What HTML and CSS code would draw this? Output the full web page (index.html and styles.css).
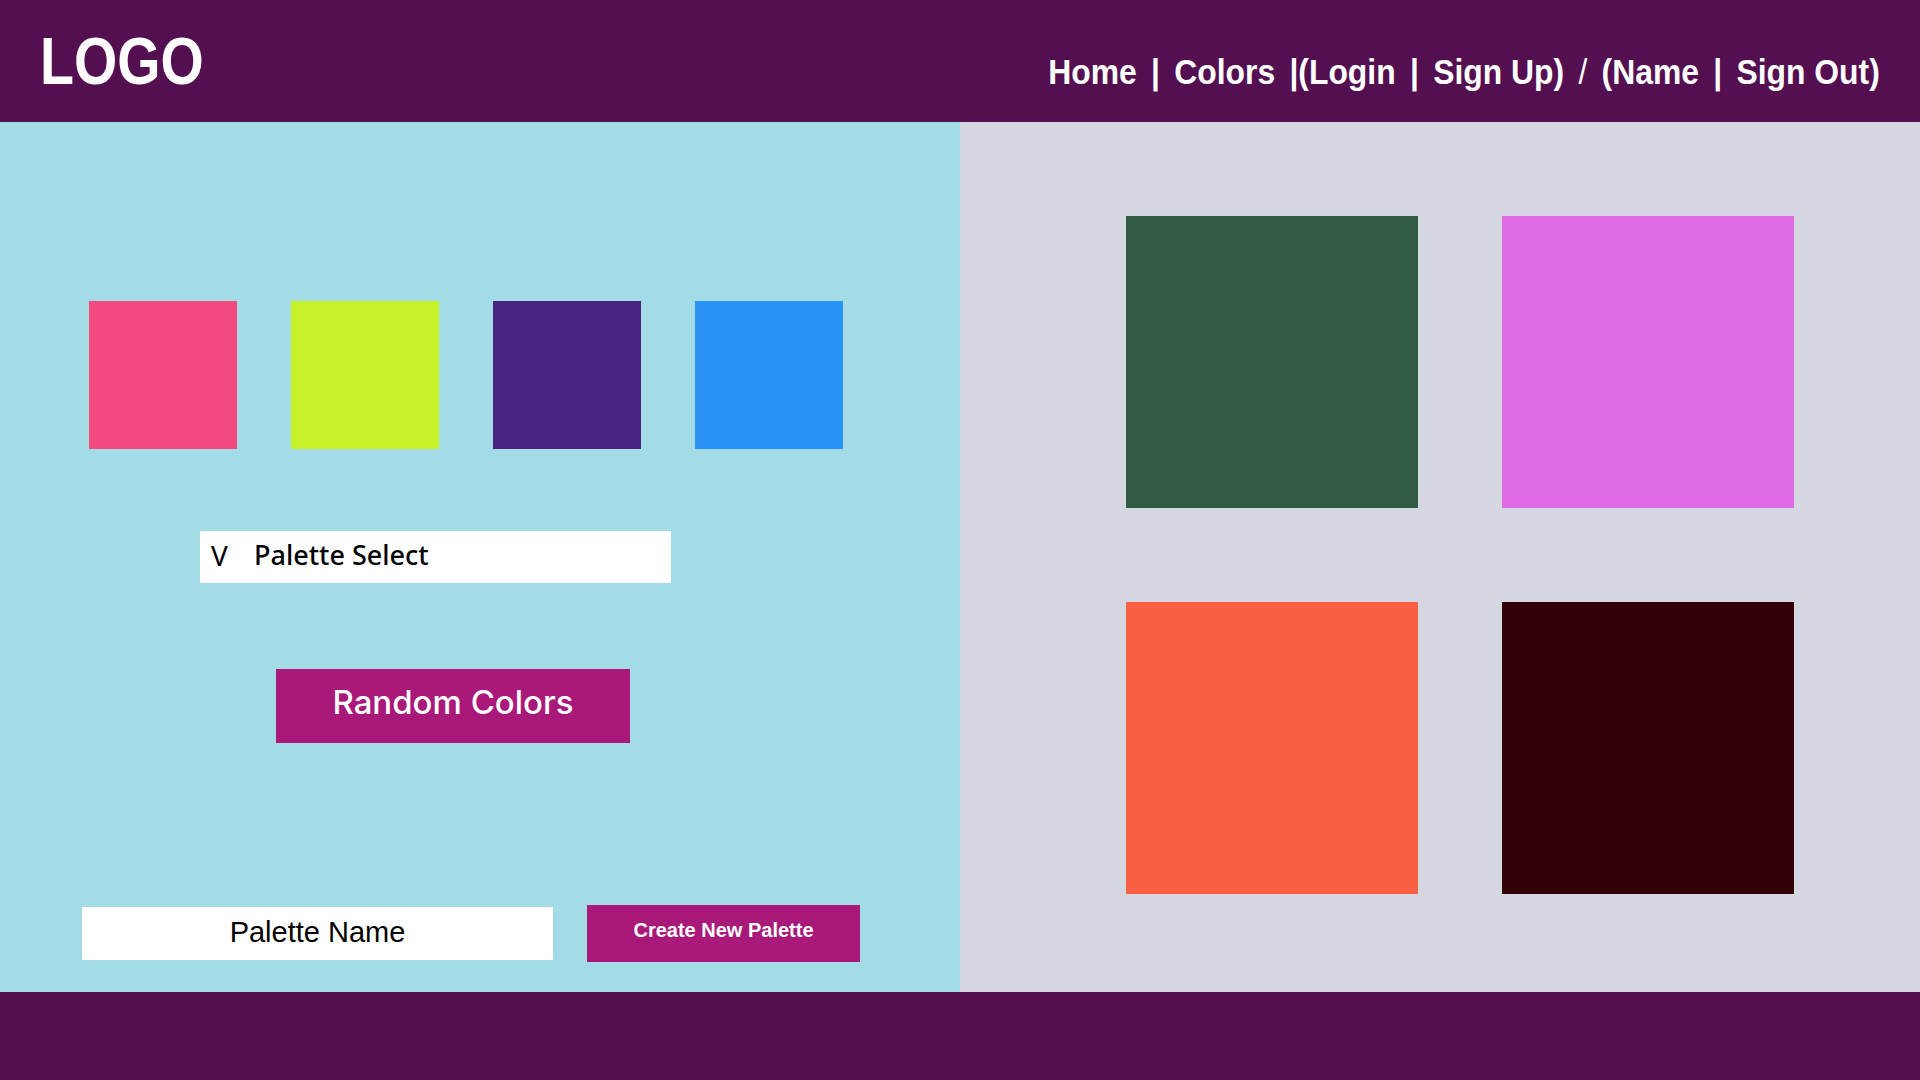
FILE: index.html
```html
<!DOCTYPE html>
<html lang="en">
<head>
<meta charset="utf-8">
<title>Palette</title>
<link rel="stylesheet" href="styles.css">
</head>
<body>
<header class="topbar">
  <div class="logo">LOGO</div>
  <nav class="nav">Home | Colors |(Login | <span class="w">Sign Up)</span> <span class="slash">/</span> (Name | <span class="w">Sign Out)</span></nav>
</header>
<main class="main">
  <section class="left">
    <div class="swatches">
      <div class="swatch" style="background:#f34a80"></div>
      <div class="swatch" style="background:#c5f127"></div>
      <div class="swatch" style="background:#492483"></div>
      <div class="swatch" style="background:#2a92f7"></div>
    </div>
    <div class="select"><span class="caret">V</span><span class="select-label">Palette Select</span></div>
    <button class="random">Random Colors</button>
    <div class="bottom-row">
      <div class="name-box">Palette Name</div>
      <button class="create">Create New Palette</button>
    </div>
  </section>
  <section class="right">
    <div class="grid">
      <div class="big" style="background:#325c42"></div>
      <div class="big" style="background:#df6ce4"></div>
      <div class="big" style="background:#f85e42"></div>
      <div class="big" style="background:#320006"></div>
    </div>
  </section>
</main>
<footer class="footer"></footer>
</body>
</html>
```
FILE: styles.css
```css
* { box-sizing: border-box; }
html, body { margin: 0; padding: 0; }
body {
  width: 1920px;
  height: 1080px;
  overflow: hidden;
  font-family: "Liberation Sans", Arial, sans-serif;
}
.topbar {
  height: 122px;
  background: #540f51;
  display: flex;
  justify-content: space-between;
  align-items: baseline;
  padding: 27px 40px 0 40px;
  color: #fff;
}
.logo {
  font-size: 67px;
  line-height: 67px;
  font-weight: 700;
  transform: scaleX(0.83);
  transform-origin: left center;
}
.nav {
  font-size: 35px;
  line-height: 40px;
  font-weight: 700;
  word-spacing: 6px;
  transform: scaleX(0.91);
  transform-origin: right center;
  white-space: nowrap;
}
.nav .w { word-spacing: 0; }
.slash { font-weight: 400; }
.main {
  display: flex;
  height: 870px;
}
.left {
  width: 960px;
  background: #a3dce6;
  display: flex;
  flex-direction: column;
  align-items: flex-start;
}
.swatches {
  display: flex;
  gap: 54px;
  margin: 179px 0 0 89px;
}
.swatch {
  width: 148px;
  height: 148px;
}
.select {
  margin: 82px 0 0 200px;
  width: 471px;
  height: 52px;
  background: #fff;
  display: flex;
  align-items: center;
  padding: 0 0 5px 11px;
  font-family: "Noto Sans", "Open Sans", sans-serif;
  color: #000;
}
.caret {
  font-size: 28px;
  font-weight: 400;
  width: 43px;
}
.select-label {
  font-size: 27px;
  font-weight: 500;
}
.random {
  margin: 86px 0 0 276px;
  width: 354px;
  height: 74px;
  border: none;
  background: #a8197a;
  color: #fff;
  font-family: "Inter", "Noto Sans", sans-serif;
  font-size: 33px;
  font-weight: 500;
  padding: 0 0 8px 0;
}
.bottom-row {
  margin: 162px 0 0 82px;
  display: flex;
  align-items: center;
  gap: 34px;
}
.name-box {
  width: 471px;
  height: 53px;
  background: #fff;
  color: #000;
  display: flex;
  align-items: center;
  justify-content: center;
  font-size: 29px;
  padding-bottom: 3px;
}
.create {
  width: 273px;
  height: 57px;
  border: none;
  background: #a8197a;
  color: #fff;
  font-family: "Liberation Sans", Arial, sans-serif;
  font-size: 20px;
  font-weight: 700;
  padding: 0 0 6px 0;
}
.right {
  width: 960px;
  background: #d4d7e0;
  padding: 94px 0 0 166px;
}
.grid {
  display: grid;
  grid-template-columns: 292px 292px;
  grid-auto-rows: 292px;
  column-gap: 84px;
  row-gap: 94px;
}
.footer {
  height: 88px;
  background: #540f51;
}
```
